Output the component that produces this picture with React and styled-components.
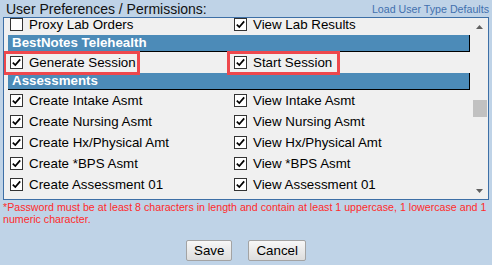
import React, { useLayoutEffect, useRef } from "react";
import styled, { createGlobalStyle } from "styled-components";

const GlobalStyle = createGlobalStyle`
  html, body { margin: 0; padding: 0; }
  body {
    background: #bfd3e7;
    font-family: "Liberation Sans", Arial, sans-serif;
    color: #000;
  }
`;

const Page = styled.div`
  width: 492px;
  height: 265px;
  padding: 0 3px;
  box-sizing: border-box;
  display: flex;
  flex-direction: column;
`;

const TitleBar = styled.div`
  height: 17px;
  display: flex;
  align-items: flex-start;
  justify-content: space-between;
`;

const Title = styled.div`
  font-size: 14px;
  line-height: 16px;
  padding-top: 1px;
  padding-left: 3px;
  color: #111;
`;

const DefaultsLink = styled.a`
  font-size: 10.67px;
  line-height: 12px;
  margin-top: 3px;
  color: #4270ae;
  text-decoration: none;
  cursor: pointer;
`;

const Box = styled.div`
  height: 183px;
  box-sizing: border-box;
  border: 1px solid #3d6fa6;
  background: #f0f0f0;
  display: flex;
`;

const ListArea = styled.div`
  flex: 1;
  overflow: hidden;
  padding: 0 1px 0 4px;
`;

const SectionHeader = styled.div`
  height: 16px;
  line-height: 16px;
  border-bottom: 1px solid #000;
  border-right: 1px solid #000;
  background: #4c8bb8;
  color: #fff;
  font-weight: bold;
  font-size: 13.33px;
  padding-left: 4px;
`;

const Row = styled.div`
  height: 21px;
  display: grid;
  grid-template-columns: 224px 1fr;
`;

const Cell = styled.label`
  position: relative;
  display: flex;
  align-items: center;
  padding-left: 2px;
  font-size: 13.33px;
  gap: 6px;
`;

const Highlight = styled.span`
  position: absolute;
  left: -5px;
  top: -1px;
  width: ${(p) => p.$w}px;
  height: 24px;
  box-sizing: border-box;
  border: 3px solid #ee484d;
  pointer-events: none;
`;

const CheckBox = styled.span`
  width: 13px;
  height: 13px;
  box-sizing: border-box;
  border: 1px solid #333;
  background: #fff;
  display: inline-flex;
  align-items: center;
  justify-content: center;
  flex: none;
`;

const ScrollBar = styled.div`
  width: 17px;
  display: flex;
  flex-direction: column;
  background: #f0f0f0;
`;

const ArrowButton = styled.div`
  height: 17px;
  display: flex;
  align-items: center;
  justify-content: center;
`;

const Track = styled.div`
  flex: 1;
  display: flex;
  flex-direction: column;
`;

const Thumb = styled.div`
  height: 17px;
  margin: 0 1px 0 2px;
  background: #c1c1c1;
`;

const Note = styled.div`
  color: #ff2b2b;
  font-size: 10.67px;
  line-height: 12px;
  padding-top: 1px;
`;

const Buttons = styled.div`
  display: flex;
  justify-content: center;
  gap: 16px;
  margin-top: 15px;
`;

const Button = styled.button`
  height: 21px;
  padding: 0 7px;
  font-family: "Liberation Sans", Arial, sans-serif;
  font-size: 13.33px;
  color: #000;
  border: 1px solid #a3a3a3;
  border-radius: 2px;
  background: linear-gradient(#f7f7f7, #dddddd);
  box-sizing: border-box;
`;

function Check({ checked }) {
  return (
    <CheckBox>
      {checked && (
        <svg width="11" height="11" viewBox="0 0 11 11">
          <path d="M1.8 5.6 L4.3 8.1 L9.2 2.4" fill="none" stroke="#000" strokeWidth="1.7" />
        </svg>
      )}
    </CheckBox>
  );
}

const sections = [
  {
    rows: [[{ label: "Proxy Lab Orders", checked: false }, { label: "View Lab Results", checked: true }]],
  },
  {
    title: "BestNotes Telehealth",
    rows: [
      [
        { label: "Generate Session", checked: true, hl: 137 },
        { label: "Start Session", checked: true, hl: 113 },
      ],
    ],
  },
  {
    title: "Assessments",
    rows: [
      ["Create Intake Asmt", "View Intake Asmt"],
      ["Create Nursing Asmt", "View Nursing Asmt"],
      ["Create Hx/Physical Amt", "View Hx/Physical Amt"],
      ["Create *BPS Asmt", "View *BPS Asmt"],
      ["Create Assessment 01", "View Assessment 01"],
      ["Create Assessment 02", "View Assessment 02"],
    ].map((r) => r.map((label) => ({ label, checked: true }))),
  },
];

function Arrow({ down }) {
  return (
    <svg width="7" height="4" viewBox="0 0 7 4">
      <polygon points={down ? "0,0 7,0 3.5,4" : "0,4 7,4 3.5,0"} fill="#606060" />
    </svg>
  );
}

export default function App() {
  const listRef = useRef(null);
  useLayoutEffect(() => {
    if (listRef.current) listRef.current.scrollTop = 4;
  }, []);

  return (
    <>
      <GlobalStyle />
      <Page>
        <TitleBar>
          <Title>User Preferences / Permissions:</Title>
          <DefaultsLink>Load User Type Defaults</DefaultsLink>
        </TitleBar>
        <Box>
          <ListArea ref={listRef}>
            {sections.map((s, si) => (
              <React.Fragment key={si}>
                {s.title && <SectionHeader>{s.title}</SectionHeader>}
                {s.rows.map((r, i) => (
                  <Row key={i}>
                    {r.map((c) => (
                      <Cell key={c.label}>
                        <Check checked={c.checked} />
                        {c.label}
                        {c.hl && <Highlight $w={c.hl} />}
                      </Cell>
                    ))}
                  </Row>
                ))}
              </React.Fragment>
            ))}
          </ListArea>
          <ScrollBar>
            <ArrowButton>
              <Arrow />
            </ArrowButton>
            <Track>
              <Thumb style={{ marginTop: 65 }} />
            </Track>
            <ArrowButton>
              <Arrow down />
            </ArrowButton>
          </ScrollBar>
        </Box>
        <Note>
          *Password must be at least 8 characters in length and contain at least 1 uppercase, 1 lowercase and 1
          numeric character.
        </Note>
        <Buttons>
          <Button>Save</Button>
          <Button>Cancel</Button>
        </Buttons>
      </Page>
    </>
  );
}
